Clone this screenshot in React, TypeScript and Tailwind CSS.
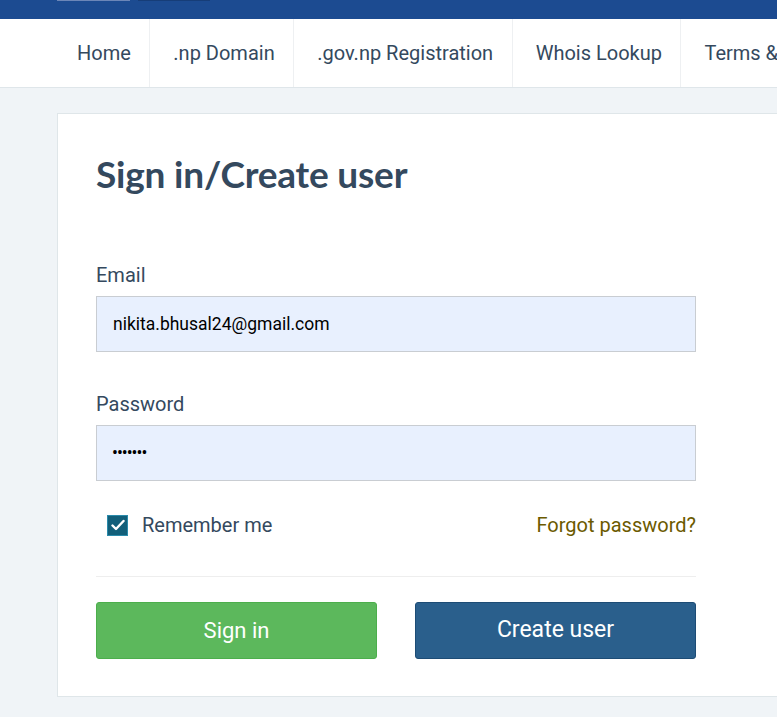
import React from "react";

const navItems = ["Home", ".np Domain", ".gov.np Registration", "Whois Lookup", "Terms & Conditions"];

export default function App() {
  return (
    <div className="w-[777px] h-[717px] overflow-hidden bg-[#f0f4f7] font-['Roboto',sans-serif]">
      <div className="h-[19px] bg-[#1c4b91] relative">
        <div className="absolute left-[57px] top-0 w-[73px] h-[1px] bg-[#6b86b8]" />
        <div className="absolute left-[138px] top-0 w-[72px] h-[1px] bg-[#163d78]" />
      </div>
      <nav className="h-[69px] bg-white border-b border-[#dfe6ea] flex pl-[54px] whitespace-nowrap overflow-hidden">
        {navItems.map((item, i) => (
          <div
            key={item}
            className={`flex items-center pl-[23px] pr-[18.5px] text-[20px] text-[#34495e] ${i > 0 ? "border-l border-[#eef0f2]" : ""}`}
          >
            {item}
          </div>
        ))}
      </nav>
      <div className="pt-[25px] pl-[57px]">
        <div className="bg-white border border-[#dfe6e9] border-r-0 w-[740px] h-[584px] pl-[38px] pt-[38px]">
          <h1 className="text-[37px] leading-[44px] font-bold text-[#34495e] font-['Lato',sans-serif] tracking-[-0.2px]">
            Sign in/Create user
          </h1>
          <div className="w-[600px] mt-[67px]">
            <label className="block text-[20px] leading-[24px] text-[#34495e]">Email</label>
            <div className="mt-[9px] h-[56px] bg-[#e8f0fe] border border-[#c9cdd2] flex items-center pl-[16px] text-[17.5px] text-black">
              nikita.bhusal24@gmail.com
            </div>
            <label className="block mt-[40px] text-[20px] leading-[24px] text-[#34495e]">Password</label>
            <div className="mt-[9px] h-[56px] bg-[#e8f0fe] border border-[#c9cdd2] flex items-center pl-[15px] text-[17.5px] text-black tracking-[-1px]">
              •••••••
            </div>
            <div className="mt-[32px] flex items-center justify-between h-[24px]">
              <div className="flex items-center pl-[11px]">
                <div className="w-[21px] h-[21px] bg-[#125f7a] border border-[#2b8bab] flex items-center justify-center">
                  <svg width="14" height="12" viewBox="0 0 14 12" fill="none">
                    <path d="M1.5 6.5 L5 10 L12.5 2" stroke="white" strokeWidth="2.4" strokeLinecap="round" strokeLinejoin="round" />
                  </svg>
                </div>
                <span className="ml-[14px] text-[20px] text-[#34495e]">Remember me</span>
              </div>
              <span className="text-[20px] text-[#6b5a00]">Forgot password?</span>
            </div>
            <div className="mt-[39px] border-t border-[#eeeeee]" />
            <div className="mt-[25px] flex justify-between">
              <button className="w-[281px] h-[57px] bg-[#5cb85c] border border-[#4cae4c] rounded-[3px] text-white text-[22px]">
                Sign in
              </button>
              <button className="w-[281px] h-[57px] bg-[#2a5f8c] border border-[#1d4c75] rounded-[3px] text-white text-[23px]">
                Create user
              </button>
            </div>
          </div>
        </div>
      </div>
    </div>
  );
}
